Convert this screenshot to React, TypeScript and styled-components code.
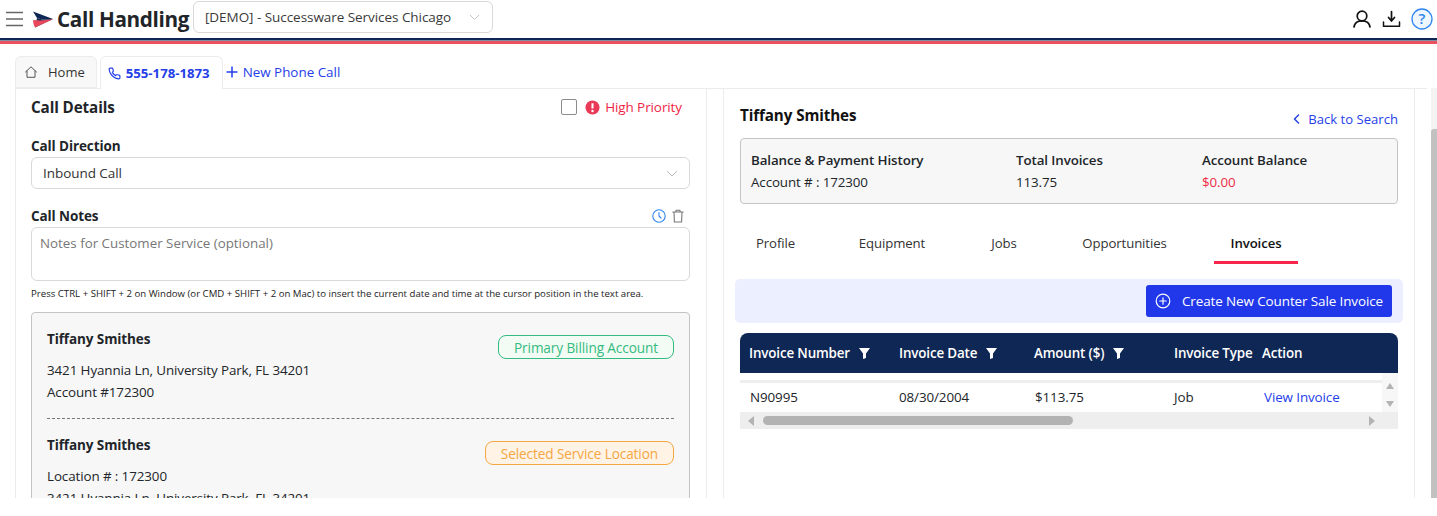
import React from "react";
import styled, { createGlobalStyle } from "styled-components";

const Global = createGlobalStyle`
  html, body { margin: 0; padding: 0; background: #fff; }
  body { font-family: "Open Sans", "Noto Sans", sans-serif; font-size: 14px; color: #212529; }
  * { box-sizing: border-box; }
`;
const Page = styled.div`width: 1437px; height: 516px; overflow: hidden; background: #fff;`;
const Header = styled.header`height: 38px; display: flex; align-items: center; padding: 0 4px 0 5px;`;
const Burger = styled.svg`width: 19px; height: 18px; margin-right: 8px; flex: none;`;
const Logo = styled.svg`width: 22px; height: 17px; margin-right: 3px; flex: none;`;
const AppTitle = styled.h1`margin: 0 4px 0 0; font-size: 20.7px; line-height: 38px; font-weight: 700; color: #212529; letter-spacing: -0.35px; white-space: nowrap; width: 132px;`;
const Select = styled.div<{ $w?: string; $h: number; $r: number }>`
  width: ${p => p.$w || "auto"}; height: ${p => p.$h}px; border: 1px solid #d9d9d9; border-radius: ${p => p.$r}px;
  display: flex; align-items: center; justify-content: space-between; padding: 0 11px; font-size: 13.5px; color: #333; background: #fff; letter-spacing: -0.05px;
`;
const HeaderSelect = styled(Select)`margin-bottom: 4px; padding-right: 12px; color: #3a3a3a;`;
const DirectionSelect = styled(Select)`margin-top: 2px;`;
const Actions = styled.div`margin-left: auto; display: flex; align-items: center; gap: 10px;`;
const Stripe = styled.div`height: 6px; background: linear-gradient(#0f2755 0 2px, #7d8fa5 2px 3px, #fff 3px 3.4px, #ec4f60 3.4px 6px);`;
const TabBar = styled.nav`height: 44px; padding: 12px 0 0 15px; display: flex; align-items: flex-end;`;
const Tab = styled.div<{ $active?: boolean }>`
  height: ${p => (p.$active ? 33 : 32)}px; border: 1px solid #ececec; border-bottom: ${p => (p.$active ? "0" : "1px solid #ececec")};
  border-radius: 6px 6px 0 0; padding: 0 ${p => (p.$active ? 12 : 11)}px 0 8px; display: flex; align-items: center; gap: 10px;
  background: ${p => (p.$active ? "#fff" : "#f8f8f8")}; margin-right: ${p => (p.$active ? 3 : 3)}px; font-size: ${p => (p.$active ? 13.2 : 13)}px;
  color: ${p => (p.$active ? "#2540e8" : "#333")}; font-weight: ${p => (p.$active ? 700 : 400)};
  ${p => p.$active && "margin-bottom: -1px; gap: 5px; padding-left: 7px; position: relative;"}
`;
const NewCall = styled.div`display: flex; align-items: center; gap: 5px; color: #2540e8; font-size: 13.4px; height: 32px; white-space: nowrap;`;
const Body = styled.main`height: 410px; display: flex; padding-left: 15px;`;
const Panels = styled.div`width: 1412px; height: 410px; flex: none; display: flex; gap: 16px; border-top: 1px solid #ececec;`;
const Panel = styled.section`border: 1px solid #ececec; border-width: 0 1px; overflow: hidden; width: 692px; height: 409px;`;
const LeftPanel = styled(Panel)`padding: 8px 16px 0 15px;`;
const RightPanel = styled(Panel)`padding: 12px 16px 0 16px;`;
const Gutter = styled.div`width: 4px; flex: none;`;
const ScrollTrack = styled.div`width: 6px; height: 410px; background: #f3f3f3; padding-top: 41px; flex: none;`;
const ScrollThumb = styled.div`height: 369px; border-radius: 3px 0 0 0; background: #c1c1c1;`;
const RowBetween = styled.div<{ $mt?: number }>`display: flex; justify-content: space-between; align-items: center; margin-top: ${p => p.$mt || 0}px;`;
const SectionTitle = styled.h2`margin: 0; font-size: 15.2px; font-weight: 700; color: #212529; line-height: 20px; letter-spacing: -0.1px;`;
const Priority = styled.label`display: flex; align-items: center; gap: 5px; color: #f01f44; font-size: 13.5px; margin-right: 8px; letter-spacing: -0.1px;`;
const Check = styled.span`width: 16px; height: 16px; border: 1px solid #8c8c8c; border-radius: 2px; display: block; background: #fff; margin-right: 3px;`;
const Label = styled.div<{ $mt?: number }>`font-size: 13.5px; font-weight: 700; color: #212529; line-height: 18px; letter-spacing: -0.1px; margin-top: ${p => p.$mt || 0}px;`;
const NotesIcons = styled.div`display: flex; gap: 6px; align-items: center; margin-right: 6px;`;
const Notes = styled.div`height: 54px; border: 1px solid #d9d9d9; border-radius: 6px; padding: 6px 8px; font-size: 13.35px; color: #777; margin-top: 2px;`;
const Hint = styled.p`margin: 6px 0 0; font-size: 9.65px; line-height: 14px; color: #222; white-space: nowrap;`;
const AccountCard = styled.div`margin-top: 11px; width: 659px; background: #f7f7f7; border: 1px solid #c4c4c4; border-radius: 4px 4px 0 0; padding: 15px 15px 0; color: #212529; height: 240px;`;
const CardName = styled.div`font-size: 13.5px; font-weight: 700; line-height: 22px; letter-spacing: -0.1px;`;
const CardLine = styled.div`font-size: 13.4px; line-height: 22px; letter-spacing: -0.1px; white-space: nowrap;`;
const CardTop = styled.div`display: flex; justify-content: space-between; align-items: flex-start;`;
const Badge = styled.span<{ $fg: string; $bg: string }>`
  border: 1px solid ${p => p.$fg}; background: ${p => p.$bg}; color: ${p => p.$fg}; border-radius: 8px;
  height: 24px; padding: 0 15px; display: flex; align-items: center; font-size: 13.6px; margin-top: 7px; letter-spacing: -0.1px;
`;
const Dashed = styled.hr`border: 0; border-top: 1px dashed #777; margin: 15px 0 15px;`;
const Name = styled.h2`margin: 0; padding-top: 1px; font-size: 15.2px; font-weight: 700; line-height: 22px; color: #111; letter-spacing: -0.1px;`;
const BackLink = styled.a`display: flex; align-items: center; gap: 8px; color: #2540e8; font-size: 13.1px; margin-top: 9px;`;
const Summary = styled.div`margin-top: 10px; height: 66px; border: 1px solid #c4c4c4; border-radius: 4px; background: #f7f7f7; padding: 10px 10px; display: grid; grid-template-columns: 265px 186px 1fr; font-size: 13.35px; line-height: 22px; color: #212529; letter-spacing: -0.1px;`;
const SummaryHead = styled.div`font-weight: 600;`;
const Red = styled.div`color: #ed2b45;`;
const ProfileTabs = styled.div`height: 65px; display: flex; margin-top: 10px; font-size: 13.2px; color: #333;`;
const ProfileTab = styled.div<{ $w: number; $active?: boolean }>`
  width: ${p => p.$w}px; height: 50px; display: flex; align-items: center; justify-content: center; padding-top: 10px;
  font-weight: ${p => (p.$active ? 600 : 400)}; color: ${p => (p.$active ? "#111" : "#333")};
  border-bottom: ${p => (p.$active ? "3px solid #f5264a" : "3px solid transparent")}; letter-spacing: -0.1px;
`;
const ActionBar = styled.div`height: 44px; margin: 0 -5px; width: 668px; background: #ecefff; border-radius: 5px; display: flex; align-items: center; justify-content: flex-end; padding-right: 11px;`;
const PrimaryBtn = styled.button`height: 32px; width: 246px; border: 0; border-radius: 3px; background: #2138ea; color: #fff; font: inherit; font-size: 13.45px; display: flex; align-items: center; gap: 11px; padding: 0 0 0 9px; letter-spacing: -0.1px; white-space: nowrap;`;
const Table = styled.div`margin-top: 10px; width: 658px;`;
const THead = styled.div`height: 40px; background: #0f2755; border-radius: 8px 8px 0 0; color: #fff; font-size: 13.4px; font-weight: 600; display: grid; grid-template-columns: 150px 135px 140px 88px 1fr; align-items: center; padding-left: 9px; letter-spacing: -0.15px;`;
const Th = styled.div`display: flex; align-items: center; gap: 9px; white-space: nowrap;`;
const TableMiddle = styled.div`display: flex; height: 39px;`;
const Rows = styled.div`flex: 1; padding-top: 7px;`;
const Row = styled.div`height: 32px; border-top: 3px solid #eeeeee; display: grid; grid-template-columns: 149px 136px 139px 90px 1fr; align-items: center; padding: 0 0 2px 10px; font-size: 13.4px; color: #212529; letter-spacing: -0.1px;`;
const LinkText = styled.span`color: #2540e8;`;
const VBar = styled.div`width: 16px; background: #f7f7f7; display: flex; flex-direction: column; align-items: center; justify-content: center; gap: 8px; padding-top: 4px;`;
const HBar = styled.div`height: 17px; background: #eeeeee; display: flex; align-items: center; padding: 0 22px 0 7px; justify-content: space-between;`;
const HThumb = styled.div`width: 310px; height: 9px; border-radius: 5px; background: #b3b3b3; margin-left: 8px; margin-right: auto;`;
const Triangle = styled.svg`width: 8px; height: 10px; display: block; flex: none;`;

const I = { fill: "none", strokeLinecap: "round" as const, strokeLinejoin: "round" as const };
const Funnel = () => (
  <svg width="11" height="11" viewBox="0 0 11 11"><path d="M0 0h11L7 5.500V10L4 11V5.500z" fill="#fff" /></svg>
);

export default function App() {
  return (
    <Page>
      <Global />
      <Header>
        <Burger viewBox="0 0 19 18"><path d="M1 2.500h17M1 9h17M1 15.500h17" stroke="#666" strokeWidth="1.600" /></Burger>
        <Logo viewBox="0 0 22 17">
          <path d="M1 0.500 21 8 10 8.500 5 7z" fill="#0f2755" />
          <path d="M5 7 10 8.500 21 8 3 16.500z" fill="#0f2755" />
          <path d="M1 9 9 9.500 21 8.300 3 16.500 1.500 13z" fill="#e8485c" />
        </Logo>
        <AppTitle>Call Handling</AppTitle>
        <HeaderSelect $w="300px" $h={32} $r={6}>
          <span>[DEMO] - Successware Services Chicago</span>
          <svg width="11" height="7" viewBox="0 0 11 7"><path d="M1 1l4.500 4.500L10 1" stroke="#c4c4c4" strokeWidth="1" fill="none" /></svg>
        </HeaderSelect>
        <Actions>
          <svg width="20" height="20" viewBox="0 0 20 20" {...I}><circle cx="10" cy="7" r="4.800" stroke="#111" strokeWidth="1.700" /><path d="M2 18c.6-4 3.600-6.200 8-6.200s7.400 2.200 8 6.200" stroke="#111" strokeWidth="1.700" /></svg>
          <svg width="19" height="18" viewBox="0 0 19 18" {...I}><path d="M9.500 1.500v9M6.500 7.500l3 3.500 3-3.500" stroke="#111" strokeWidth="1.700" /><path d="M1.500 12v4.200h16V12" stroke="#111" strokeWidth="1.500" /></svg>
          <svg width="22" height="22" viewBox="0 0 22 22"><circle cx="11" cy="11" r="10" stroke="#2f86f0" strokeWidth="1.300" fill="#eef6ff" /><text x="11" y="16" textAnchor="middle" fontSize="15" fontWeight="600" fill="#2f86f0" fontFamily="Open Sans, sans-serif">?</text></svg>
        </Actions>
      </Header>
      <Stripe />
      <TabBar>
        <Tab>
          <svg width="14" height="14" viewBox="0 0 14 14" {...I}><path d="M1.500 7 7 1.800 12.500 7M3 6v6.300h8V6" stroke="#555" strokeWidth="1" /></svg>
          Home
        </Tab>
        <Tab $active>
          <svg width="13" height="13" viewBox="0 0 24 24" {...I}><path d="M22 16.900v3a2 2 0 0 1-2.200 2 19.800 19.800 0 0 1-8.600-3.100 19.500 19.500 0 0 1-6-6 19.800 19.800 0 0 1-3.100-8.700A2 2 0 0 1 4.100 2h3a2 2 0 0 1 2 1.700c.1 1 .4 1.900.7 2.800a2 2 0 0 1-.5 2.100L8.100 9.900a16 16 0 0 0 6 6l1.300-1.300a2 2 0 0 1 2.100-.4c.9.300 1.800.6 2.800.7a2 2 0 0 1 1.700 2z" stroke="#2540e8" strokeWidth="2.200" /></svg>
          555-178-1873
        </Tab>
        <NewCall>
          <svg width="12" height="12" viewBox="0 0 12 12"><path d="M6 .5v11M.5 6h11" stroke="#2540e8" strokeWidth="1.500" /></svg>
          New Phone Call
        </NewCall>
      </TabBar>
      <Body>
        <Panels>
          <LeftPanel>
            <RowBetween>
              <SectionTitle>Call Details</SectionTitle>
              <Priority>
                <Check />
                <svg width="15" height="15" viewBox="0 0 16 16"><circle cx="8" cy="8" r="7.500" fill="#ea3a57" /><path d="M8 3.500v5.500" stroke="#fff" strokeWidth="2.200" /><circle cx="8" cy="11.700" r="1.300" fill="#fff" /></svg>
                High Priority
              </Priority>
            </RowBetween>
            <Label $mt={20}>Call Direction</Label>
            <DirectionSelect $h={32} $r={6}>
              <span>Inbound Call</span>
              <svg width="12" height="7" viewBox="0 0 12 7"><path d="M1 1l5 5 5-5" stroke="#bbb" strokeWidth="1" fill="none" /></svg>
            </DirectionSelect>
            <RowBetween $mt={18}>
              <Label>Call Notes</Label>
              <NotesIcons>
                <svg width="14" height="14" viewBox="0 0 14 14" {...I}><circle cx="7" cy="7" r="6.200" stroke="#2f86f0" strokeWidth="1.100" /><path d="M7 3.500V7l2 2" stroke="#2f86f0" strokeWidth="1.100" /></svg>
                <svg width="12" height="14" viewBox="0 0 12 14" {...I}><path d="M.8 3h10.400M4 3V1.200h4V3M2 3l.4 10h7.200l.4-10" stroke="#777" strokeWidth="1.100" /></svg>
              </NotesIcons>
            </RowBetween>
            <Notes>Notes for Customer Service (optional)</Notes>
            <Hint>Press CTRL + SHIFT + 2 on Window (or CMD + SHIFT + 2 on Mac) to insert the current date and time at the cursor position in the text area.</Hint>
            <AccountCard>
              <CardTop>
                <CardName>Tiffany Smithes</CardName>
                <Badge $fg="#33bb80" $bg="#f3fcf4">Primary Billing Account</Badge>
              </CardTop>
              <CardLine>3421 Hyannia Ln, University Park, FL 34201</CardLine>
              <CardLine>Account #172300</CardLine>
              <Dashed />
              <CardTop>
                <CardName>Tiffany Smithes</CardName>
                <Badge $fg="#f5a742" $bg="#fff3e6">Selected Service Location</Badge>
              </CardTop>
              <CardLine>Location # : 172300</CardLine>
              <CardLine>3421 Hyannia Ln, University Park, FL 34201</CardLine>
            </AccountCard>
          </LeftPanel>
          <RightPanel>
            <RowBetween>
              <Name>Tiffany Smithes</Name>
              <BackLink>
                <svg width="7" height="10" viewBox="0 0 7 10" {...I}><path d="M5.500 1 1.500 5l4 4" stroke="#2540e8" strokeWidth="1.500" /></svg>
                Back to Search
              </BackLink>
            </RowBetween>
            <Summary>
              <div><SummaryHead>Balance &amp; Payment History</SummaryHead><div>Account # : 172300</div></div>
              <div><SummaryHead>Total Invoices</SummaryHead><div>113.75</div></div>
              <div><SummaryHead>Account Balance</SummaryHead><Red>$0.00</Red></div>
            </Summary>
            <ProfileTabs>
              <ProfileTab $w={71}>Profile</ProfileTab>
              <ProfileTab $w={162}>Equipment</ProfileTab>
              <ProfileTab $w={62}>Jobs</ProfileTab>
              <ProfileTab $w={179}>Opportunities</ProfileTab>
              <ProfileTab $w={84} $active>Invoices</ProfileTab>
            </ProfileTabs>
            <ActionBar>
              <PrimaryBtn>
                <svg width="16" height="16" viewBox="0 0 16 16" {...I}><circle cx="8" cy="8" r="6.800" stroke="#fff" strokeWidth="1.200" /><path d="M8 4.800v6.400M4.800 8h6.400" stroke="#fff" strokeWidth="1.200" /></svg>
                Create New Counter Sale Invoice
              </PrimaryBtn>
            </ActionBar>
            <Table>
              <THead>
                <Th>Invoice Number <Funnel /></Th>
                <Th>Invoice Date <Funnel /></Th>
                <Th>Amount ($) <Funnel /></Th>
                <Th>Invoice Type</Th>
                <Th>Action</Th>
              </THead>
              <TableMiddle>
                <Rows>
                  <Row><span>N90995</span><span>08/30/2004</span><span>$113.75</span><span>Job</span><LinkText>View Invoice</LinkText></Row>
                </Rows>
                <VBar>
                  <Triangle viewBox="0 0 8 10"><path d="M4 2 8 8H0z" fill="#b3b3b3" /></Triangle>
                  <Triangle viewBox="0 0 8 10"><path d="M0 2h8L4 8z" fill="#b3b3b3" /></Triangle>
                </VBar>
              </TableMiddle>
              <HBar>
                <Triangle viewBox="0 0 8 10"><path d="M7 0v10L1 5z" fill="#b3b3b3" /></Triangle>
                <HThumb />
                <Triangle viewBox="0 0 8 10"><path d="M1 0v10l6-5z" fill="#b3b3b3" /></Triangle>
              </HBar>
            </Table>
          </RightPanel>
        </Panels>
        <Gutter />
        <ScrollTrack><ScrollThumb /></ScrollTrack>
      </Body>
    </Page>
  );
}
